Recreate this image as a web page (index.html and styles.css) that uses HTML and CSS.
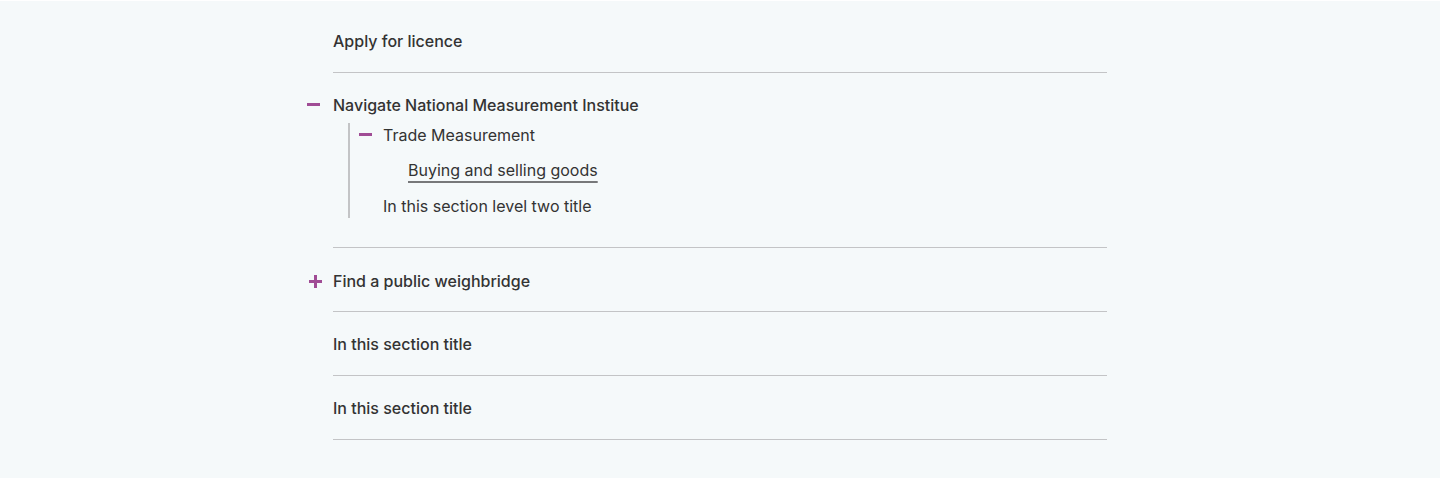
FILE: index.html
```html
<!DOCTYPE html>
<html lang="en">
<head>
<meta charset="utf-8">
<title>In this section</title>
<link rel="stylesheet" href="styles.css">
</head>
<body>
<nav class="side-nav">
  <ul class="nav-list">
    <li class="nav-item"><a class="nav-link" href="#">Apply for licence</a></li>
    <li class="nav-item is-open">
      <span class="toggle toggle-minus" aria-hidden="true"></span>
      <a class="nav-link" href="#">Navigate National Measurement Institue</a>
      <ul class="sub-list">
        <li class="sub-item is-open">
          <span class="toggle toggle-minus toggle-sub" aria-hidden="true"></span>
          <a class="sub-link" href="#">Trade Measurement</a>
          <ul class="sub-sub-list">
            <li class="sub-item"><a class="sub-link is-current" href="#">Buying and selling goods</a></li>
          </ul>
        </li>
        <li class="sub-item"><a class="sub-link" href="#">In this section level two title</a></li>
      </ul>
    </li>
    <li class="nav-item nav-item-find">
      <span class="toggle toggle-plus" aria-hidden="true"></span>
      <a class="nav-link" href="#">Find a public weighbridge</a>
    </li>
    <li class="nav-item"><a class="nav-link" href="#">In this section title</a></li>
    <li class="nav-item"><a class="nav-link" href="#">In this section title</a></li>
  </ul>
</nav>
</body>
</html>
```

FILE: styles.css
```css
html, body {
  margin: 0;
  padding: 0;
}

body {
  background: #f5f9fa;
  font-family: Inter, "Liberation Sans", sans-serif;
  color: #333333;
  font-size: 16px;
  line-height: 24px;
  height: 478px;
  border-top: 1px solid #ffffff;
  box-sizing: border-box;
}

.side-nav {
  width: 774px;
  margin: 0 auto;
  padding-top: 8px;
}

ul {
  list-style: none;
  margin: 0;
  padding: 0;
}

a {
  color: inherit;
  text-decoration: none;
}

.nav-item {
  position: relative;
  padding: 20px 0 19px;
  border-bottom: 1px solid #c3c4c6;
}

.nav-link {
  font-weight: 500;
  display: inline-block;
}

.nav-item.is-open {
  padding-bottom: 29px;
}

.nav-item-find {
  padding-top: 21px;
  padding-bottom: 18px;
}

.toggle {
  position: absolute;
  width: 13px;
  height: 13px;
}

.toggle::before,
.toggle::after {
  content: "";
  position: absolute;
  background: #a04c95;
}

.toggle::before {
  left: 0;
  top: 5px;
  width: 13px;
  height: 3px;
}

.toggle-minus {
  left: -26px;
  top: 25px;
}

.toggle-plus {
  left: -24px;
  top: 27px;
}

.toggle-plus::after {
  left: 5px;
  top: 0;
  width: 3px;
  height: 13px;
}

.sub-list {
  margin: 6px 0 0 15px;
  border-left: 2px solid #c3c4c6;
  padding-left: 33px;
  display: flex;
  flex-direction: column;
  gap: 12px;
}

.sub-item {
  position: relative;
}

.toggle-sub {
  left: -24px;
  top: 5px;
}

.sub-sub-list {
  padding-left: 25px;
  margin-top: 11px;
}

.sub-link {
  font-weight: 400;
  display: inline-block;
}

.sub-link.is-current {
  text-decoration: underline;
  text-decoration-thickness: 2px;
  text-underline-offset: 5px;
  text-decoration-color: #77787a;
}
```
